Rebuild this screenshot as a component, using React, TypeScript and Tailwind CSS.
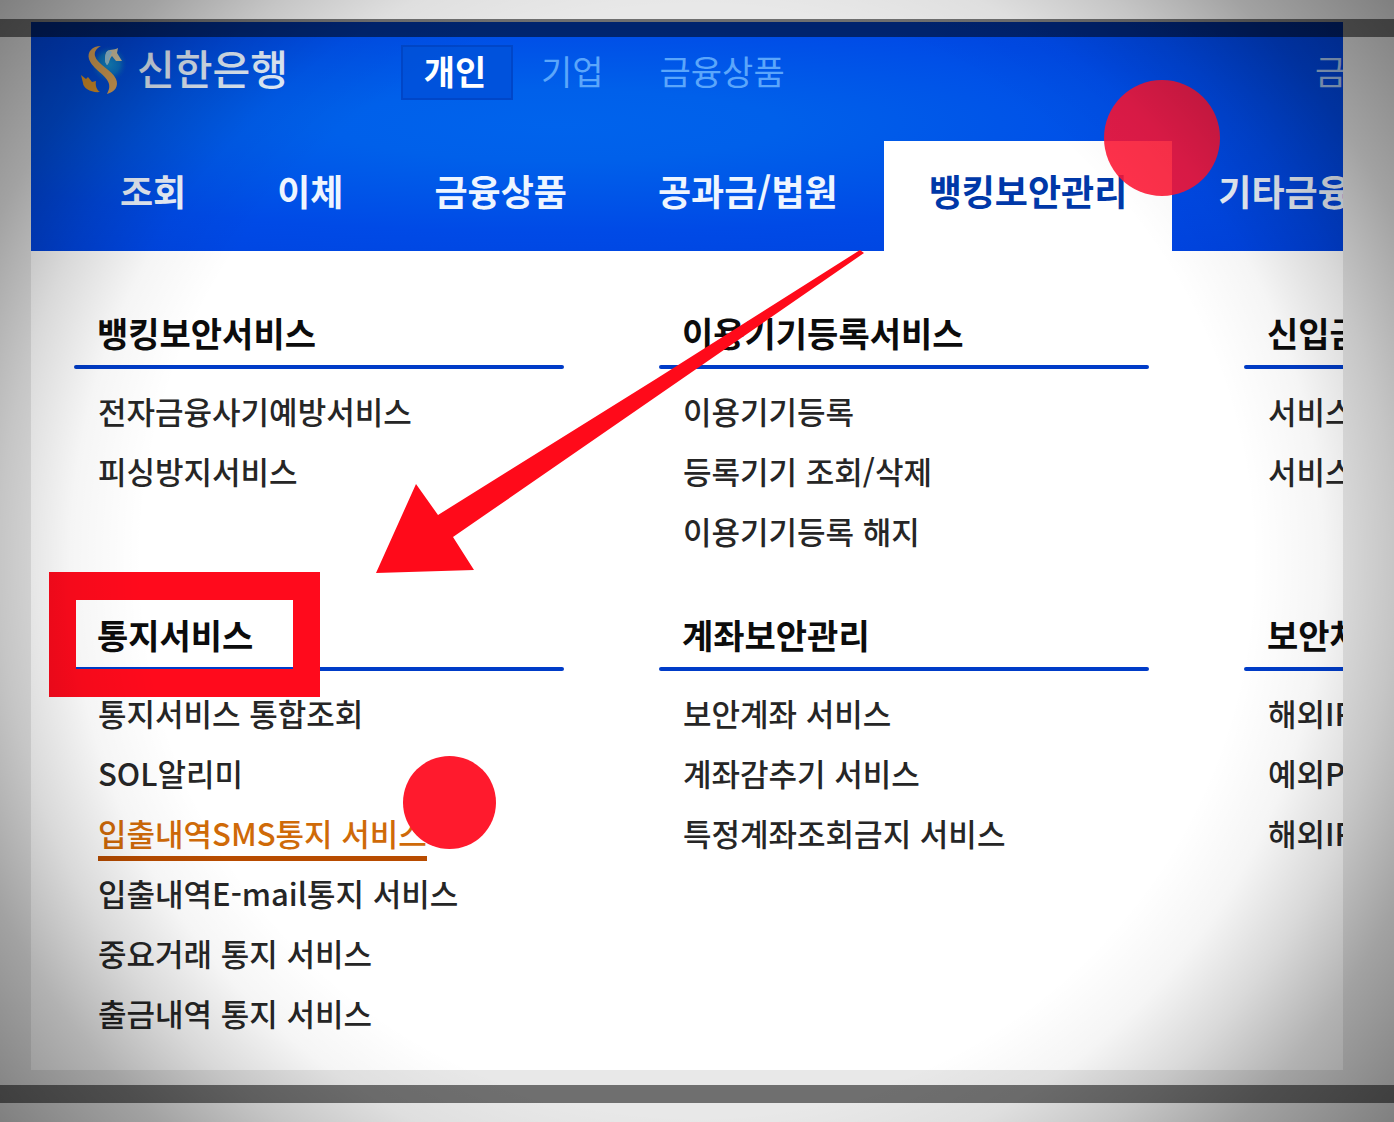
const tabs = [
  { title: '조회' },
  { title: '이체' },
  { title: '금융상품' },
  { title: '공과금/법원' },
  { title: '뱅킹보안관리', active: true },
  { title: '기타금융' },
];

const sections = [
  { title: '뱅킹보안서비스', items: ['전자금융사기예방서비스', '피싱방지서비스'] },
  { title: '이용기기등록서비스', items: ['이용기기등록', '등록기기 조회/삭제', '이용기기등록 해지'] },
  { title: '신입금', items: ['서비스', '서비스'] },
  {
    title: '통지서비스',
    marked: true,
    items: [
      '통지서비스 통합조회',
      'SOL알리미',
      '입출내역SMS통지 서비스',
      '입출내역E-mail통지 서비스',
      '중요거래 통지 서비스',
      '출금내역 통지 서비스',
    ],
  },
  { title: '계좌보안관리', items: ['보안계좌 서비스', '계좌감추기 서비스', '특정계좌조회금지 서비스'] },
  { title: '보안차', items: ['해외IP', '예외P', '해외IP'] },
];

const current = '입출내역SMS통지 서비스';

function Logo() {
  return (
    <svg viewBox="0 0 48 52" className="h-[52px] w-12 shrink-0" aria-hidden="true">
      <defs>
        <radialGradient id="globe">
          <stop offset="0" stopColor="#18a0e8" />
          <stop offset="0.6" stopColor="#0b7fdc" />
          <stop offset="1" stopColor="#0560dc" stopOpacity="0" />
        </radialGradient>
      </defs>
      <circle cx="30" cy="19" r="18" fill="url(#globe)" />
      <path
        d="M22 1 C13 1 8 7 10 14 C13 24 28 30 30 39 C31 44 29 46 28 49 C36 47 40 41 37 34 C33 25 18 19 16 11 C15 6 18 3 22 1 Z"
        fill="#e8ad5c"
      />
      <path d="M2 30 L7 34 L9 32 L13 37 L17 36 C16 41 18 45 21 47 C12 48 4 43 4 38 Z" fill="#e39a2c" />
      <path d="M27 8 C30 3 35 6 39 3 L38 8 L43 16 L37 16 L33 11 C30 14 31 17 28 20 C25 16 26 12 27 8 Z" fill="#e6d9b4" />
      <path d="M27 8 C29 4 31 6 33 7 L31 12 C29 15 31 17 28 20 C25 16 26 12 27 8 Z" fill="#a8dcf4" />
    </svg>
  );
}

function Header() {
  return (
    <header className="bg-[radial-gradient(ellipse_at_40%_45%,#0063ec_0%,#0060ea_20%,#004ae6_60%,#0042de_100%)] text-white">
      <div className="flex h-[119px] items-start pt-[23px] pl-12 whitespace-nowrap">
        <a href="#" className="flex h-[52px] w-[322px] shrink-0 items-center gap-2.5">
          <Logo />
          <span className="pb-2 text-[41px] leading-[48px] font-medium text-[#e6f2ff]">신한은행</span>
        </a>
        <nav className="flex shrink-0 text-[34px] leading-[48px] text-[#5ba6fb]">
          <a href="#" className="h-[55px] w-28 border-2 border-[#0046c8] bg-[#0052dc] pr-1 text-center font-bold text-white">
            개인
          </a>
          <a href="#" className="px-7 pt-0.5">기업</a>
          <a href="#" className="px-7 pt-0.5">금융상품</a>
        </nav>
        <a href="#" className="ml-auto w-7 overflow-hidden pt-0.5 text-[34px] leading-[48px] text-[#a9c8f4]">
          금
        </a>
      </div>
      <nav className="flex h-[110px] gap-px pl-11 text-4xl font-bold whitespace-nowrap">
        {tabs.map((tab) => (
          <a
            key={tab.title}
            href="#"
            className={
              tab.active
                ? 'flex shrink-0 items-center bg-white px-[45px] pb-3 text-[#0038a8]'
                : 'flex shrink-0 items-center px-[45px] pb-3 text-[#eef5ff]'
            }
          >
            {tab.title}
          </a>
        ))}
      </nav>
    </header>
  );
}

function Section({ title, items, marked }: { title: string; items: string[]; marked?: boolean }) {
  return (
    <section className="relative">
      <h2 className="pb-2.5 pl-[23px] text-[34px] leading-[44px] font-bold text-[#0c0c0c]">{title}</h2>
      <div className="h-1 rounded-full bg-[#003cc8]" />
      <ul className="pt-3 pl-6 text-[31px] leading-[60px] font-medium text-[#262626]">
        {items.map((item, idx) => (
          <li key={idx} className="flex h-[60px]">
            {item === current ? (
              <a href="#" className="h-[58px] border-b-5 border-[#b84c00] text-[#cf6a08]">
                {item}
              </a>
            ) : (
              <a href="#">{item}</a>
            )}
          </li>
        ))}
      </ul>
      {marked && (
        <>
          <div className="absolute -top-[41px] -left-[25px] h-[125px] w-[271px] border-x-27 border-y-28 border-[#ff0a1c]" />
          <div className="absolute top-[143px] left-[329px] size-[93px] rounded-full bg-[#ff1a2d]" />
        </>
      )}
    </section>
  );
}

export default function App() {
  return (
    <div
      lang="ko"
      className="relative min-h-screen overflow-hidden bg-[#e8e8e8] pt-[22px] pr-[51px] pb-[52px] pl-[31px] font-['Noto_Sans_CJK_KR',sans-serif]"
    >
      <main className="relative overflow-hidden bg-white">
        <Header />
        <div className="grid grid-cols-[490px_490px_490px] gap-x-[95px] gap-y-[52px] pt-[60px] pb-[27px] pl-[43px] whitespace-nowrap">
          {sections.map((section) => (
            <Section key={section.title} {...section} />
          ))}
        </div>

        {/* pointer marks */}
        <div className="absolute top-[58px] left-[1073px] size-[116px] rounded-full bg-[#ff1432]/88" />
        <svg viewBox="0 0 488 324" className="absolute top-[228px] left-[345px] h-[324px] w-[488px]" aria-hidden="true">
          <path d="M484 0 L488 3 L300 133 L77 287 L98 320 L0 323 L40 234 L62 265 L280 129 Z" fill="#ff0a1a" />
        </svg>
      </main>

      <div className="absolute inset-x-0 top-[19px] h-[18px] bg-black/52" />
      <div className="absolute inset-x-0 bottom-[19px] h-[18px] bg-black/52" />
      <div className="pointer-events-none absolute inset-0 bg-[radial-gradient(circle_farthest-corner_at_center,transparent_62%,rgba(0,0,0,0.04)_70%,rgba(0,0,0,0.15)_78%,rgba(0,0,0,0.3)_87%,rgba(0,0,0,0.45)_100%)]" />
    </div>
  );
}
